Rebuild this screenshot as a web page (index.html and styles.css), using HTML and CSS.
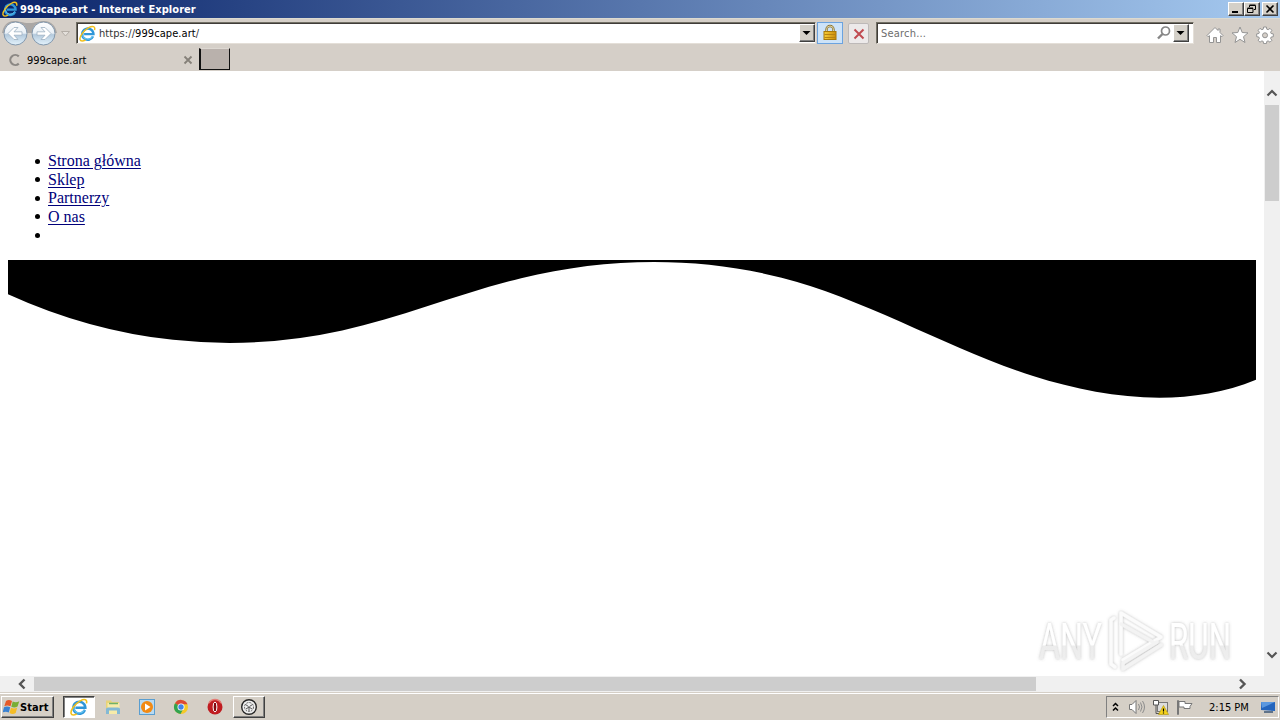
FILE: index.html
```
<!DOCTYPE html>
<html lang="pl">
<head>
	<meta charset="utf-8">
	<title>999cape.art</title>
	<link rel="stylesheet" href="styles.css">
</head>
<body>

	<svg class="defs" width="0" height="0">
		<defs>
			<linearGradient id="circle" x1="0" y1="0" x2="0" y2="1">
				<stop offset="0" stop-color="#fff"/><stop offset=".48" stop-color="#e9f0f6"/>
				<stop offset=".55" stop-color="#b3c9dc"/><stop offset="1" stop-color="#e4f3fc"/>
			</linearGradient>
			<linearGradient id="gold" x1="0" y1="0" x2="1" y2="0">
				<stop offset="0" stop-color="#f8cf38"/><stop offset="1" stop-color="#c98a08"/>
			</linearGradient>
			<linearGradient id="fade" x1="0" y1="0" x2="0" y2="1">
				<stop offset="0" stop-color="#fff"/><stop offset=".55" stop-color="#fff"/>
				<stop offset=".57" stop-color="#ececec"/><stop offset="1" stop-color="#f0f0f0"/>
			</linearGradient>
			<filter id="soft" x="-10%" y="-20%" width="120%" height="140%">
				<feDropShadow dx="0" dy="0" stdDeviation="1.5" flood-color="#777" flood-opacity=".5"/>
			</filter>
			<symbol id="ie" viewBox="0 0 16 16">
				<path d="M13.2 10.7A5.3 5.3 0 1 1 13.6 8.6H4.8" fill="none" stroke="#2f96d8" stroke-width="2.300"/>
				<path d="M12.9 10.3A5 5 0 0 1 3.4 9" fill="none" stroke="#62c4f2" stroke-width="1"/>
				<path d="M14.6 4.8C15.6 1.3 13 .3 9.1 2.5 4.4 5.200 .2 10.9 1 13.8c.5 1.800 2.800 1.500 5.100.3" fill="none" stroke="#f2c01c" stroke-width="1.4"/>
			</symbol>
		</defs>
	</svg>

	<div class="titlebar">
		<svg class="ie16" width="16" height="16"><use href="#ie"/></svg>
		<span class="title">999cape.art - Internet Explorer</span>
		<div class="winbtns">
			<span class="btn"><svg width="14" height="12"><path d="M3 8h6v2H3z"/></svg></span>
			<span class="btn"><svg width="14" height="12"><path d="M4.500 4V2.500h6v4H9M4.500 2h6M2.500 5.500h5.500v4H2.500zM2.500 5h5.500" fill="none" stroke="#000"/></svg></span>
			<span class="btn close"><svg width="14" height="12"><path d="M3.500 2.500l7 7M10.500 2.500l-7 7" stroke="#000" stroke-width="1.600"/></svg></span>
		</div>
	</div>

	<div class="navbar">
		<svg class="arrows" width="76" height="30">
			<path d="M14 3C20 3 22 5 29 5S38 3 44 3c8 0 12 6 13 12H2C3 8 7 3 14 3z" fill="#aaa7a5"/>
			<circle cx="15.500" cy="15.500" r="11.500" fill="url(#circle)" stroke="#8297ac"/>
			<circle cx="43.500" cy="15.500" r="11.500" fill="url(#circle)" stroke="#8297ac"/>
			<path d="M8 15.500l6-6h4l-4 4.300h8v3.400h-8l4 4.300h-4z" fill="#fff" stroke="#9cb0c2" stroke-width=".8"/>
			<path d="M51 15.500l-6-6h-4l4 4.300h-8v3.400h8l-4 4.300h4z" fill="#fff" stroke="#9cb0c2" stroke-width=".8"/>
			<path d="M61.500 13.500h8l-4 4.500z" fill="#e4e0db" stroke="#b4aea7"/>
		</svg>
		<div class="field address">
			<svg width="17" height="17"><use href="#ie"/></svg>
			<span class="url"><i>https://</i>999cape.art<i>/</i></span>
			<span class="drop"><svg width="13" height="15"><path d="M2.500 6h8L6.500 10z"/></svg></span>
		</div>
		<span class="lock">
			<svg width="16" height="18">
				<path d="M4.500 8V5.500a3.500 3.500 0 0 1 7 0V8" fill="none" stroke="#8a7434" stroke-width="2.400"/>
				<path d="M4.500 8V5.500a3.500 3.500 0 0 1 7 0V8" fill="none" stroke="#e6dcae" stroke-width=".9"/>
				<rect x="2" y="7.500" width="12" height="8" fill="url(#gold)" stroke="#a87908"/>
				<path d="M2.500 10.500h11M2.500 13.500h11" stroke="#b78310"/>
			</svg>
		</span>
		<span class="stop"><svg width="12" height="12"><path d="M1.500 1.500l9 9M10.500 1.500l-9 9" stroke="#c04a50" stroke-width="2"/></svg></span>
		<div class="field search">
			<span class="hint">Search...</span>
			<svg width="16" height="16"><circle cx="9.500" cy="6" r="4" fill="none" stroke="#868686" stroke-width="1.700"/><path d="M6.500 9L2 13.500" stroke="#868686" stroke-width="2.400"/></svg>
			<span class="drop"><svg width="13" height="15"><path d="M2.500 6h8L6.500 10z"/></svg></span>
		</div>
		<div class="tools">
			<svg width="18" height="18"><path d="M1 9.500L9 1.500l3 3V3h2v3.500l3 3-1 1.200-1.500-1V16.500h-4v-5h-3v5h-4V9.700L2 10.700z" fill="#fff" stroke="#949494"/></svg>
			<svg width="18" height="18"><path d="M9 1l2.200 5.500 5.800.4-4.500 3.800 1.500 5.800L9 13.300 4 16.500l1.500-5.800L1 6.900l5.800-.4z" fill="#fff" stroke="#949494"/></svg>
			<svg width="18" height="18"><path d="M7.600 1h2.800l.4 2.200 1.300.5 1.900-1.300 1.900 1.900-1.300 1.900.5 1.300 2.200.4v2.800l-2.200.4-.5 1.300 1.300 1.900-1.900 1.900-1.900-1.300-1.300.5-.4 2.200H7.600l-.4-2.200-1.300-.5L4 16.200l-1.900-1.900 1.300-1.900-.5-1.300-2.200-.4V7.900l2.200-.4.5-1.300L2.100 4.300 4 2.400l1.900 1.300 1.300-.5z" fill="#fff" stroke="#949494"/><circle cx="9" cy="9.300" r="2.500" fill="#d5cfc8" stroke="#949494"/></svg>
		</div>
	</div>

	<div class="tabs">
		<div class="tab">
			<svg width="14" height="14"><path d="M10.800 3.400a5 5 0 1 0 0 7.200" fill="none" stroke="#8b8884" stroke-width="2.200"/></svg>
			<span class="name">999cape.art</span>
			<svg width="10" height="10"><path d="M1.500 1.500l7 7M8.500 1.500l-7 7" stroke="#858079" stroke-width="1.800"/></svg>
		</div>
		<div class="newtab"></div>
	</div>

	<div class="view">
		<div class="page">
			<ul class="menu">
				<li><a href="#">Strona główna</a></li>
				<li><a href="#">Sklep</a></li>
				<li><a href="#">Partnerzy</a></li>
				<li><a href="#">O nas</a></li>
				<li></li>
			</ul>
			<svg class="wave" viewBox="0 0 1200 120" preserveAspectRatio="none">
				<path d="M321.390,56.440c58-10.790,114.160-30.130,172-41.860,82.390-16.720,168.190-17.730,250.450-.39C823.780,31,906.670,72,985.660,92.830c70.050,18.480,146.530,26.090,214.340,3V0H0V27.350A600.210,600.210,0,0,0,321.390,56.440Z"/>
			</svg>
		</div>
		<div class="vscroll">
			<svg width="16" height="16"><path d="M3.500 10.500L8 6l4.500 4.500" fill="none" stroke="#555" stroke-width="2.200"/></svg>
			<div class="thumb"></div>
			<svg class="down" width="16" height="16"><path d="M3.500 5.500L8 10l4.500-4.500" fill="none" stroke="#555" stroke-width="2.200"/></svg>
		</div>
		<!-- watermark over the page -->
		<svg class="mark" width="220" height="70">
			<g filter="url(#soft)">
				<g class="marktext" fill="url(#fade)">
					<text x="9" y="53" textLength="63" lengthAdjust="spacingAndGlyphs">ANY</text>
					<text x="139" y="53" textLength="62" lengthAdjust="spacingAndGlyphs">RUN</text>
				</g>
				<g fill="none" stroke="#fbfbfb" stroke-width="3.500" stroke-linejoin="round" stroke-linecap="round">
					<path d="M84 12l-3 2v44l4 3"/>
					<path d="M91 48V7l40 24-38 23"/>
					<path d="M91 18l32 18M131 39L93 63v-6l34-21" stroke="#f3f3f3"/>
				</g>
			</g>
		</svg>
	</div>
	<div class="hscroll">
		<svg width="16" height="16"><path d="M12.500 3.500L8 8l4.500 4.500" fill="none" stroke="#555" stroke-width="2.400"/></svg>
		<div class="thumb"></div>
		<svg class="right" width="16" height="16"><path d="M5 3.500L9.500 8 5 12.500" fill="none" stroke="#555" stroke-width="2.400"/></svg>
	</div>

	<div class="taskbar">
		<div class="start">
			<svg width="17" height="16">
				<path d="M3 2c2-1.500 4-1.200 6 0L7.500 7.300C5.500 6.300 3.500 6 1.300 7.300z" fill="#e65a28"/>
				<path d="M9.700 2.500c2 1.200 4.500 1 6.600-.2L14.500 7.600c-2 1.200-4.200 1.200-6.200.2z" fill="#79ae35"/>
				<path d="M1 8.300c2-1.200 4.200-1 6.200 0l-1.400 5.200c-2-1-4.200-1.200-6.200 0z" fill="#3a82d2"/>
				<path d="M8 8.800c2 1 4.200 1 6.200-.2l-1.500 5.400c-2 1.200-4.200 1.200-6.200 0z" fill="#f5bd27"/>
			</svg>
			<span>Start</span>
		</div>
		<div class="quick">
			<span class="task active"><svg width="18" height="18"><use href="#ie"/></svg></span>
			<span class="task"><svg width="18" height="18"><path d="M2 2.500h5l1 1.500h7v12H2z" fill="#e8d378"/><path d="M3.500 5h12v11h-12z" fill="#f7eba9"/><path d="M5 5.500h9" stroke="#6fb169" stroke-width="1.500"/><path d="M2 16v-5q0-1.500 2-1.500h10q2 0 2 1.500V16h-3v-3.500H5V16z" fill="#83b9d5"/></svg></span>
			<span class="task"><svg width="18" height="18"><rect x="1.500" y="1.500" width="15" height="15" fill="#b8daf2" stroke="#5a9ed0"/><circle cx="9" cy="9" r="6" fill="#f28a14"/><path d="M7 5.500l5.500 3.500L7 12.500z" fill="#fff"/></svg></span>
			<span class="task"><svg width="18" height="18"><circle cx="9" cy="9" r="7" fill="#f5c928"/><path d="M9 9L3 5.300A7 7 0 0 1 15.500 6.200H9z" fill="#dc4936"/><path d="M3 5.300A7 7 0 0 0 8.500 16l3-5.500L9 9z" fill="#32a350"/><circle cx="9" cy="9" r="3.500" fill="#fff"/><circle cx="9" cy="9" r="2.700" fill="#4284e8"/></svg></span>
			<span class="task"><svg width="18" height="18"><circle cx="9" cy="9" r="7.500" fill="#c01c20"/><path d="M3 5a7 7 0 0 1 12 0" fill="none" stroke="#e57b74" stroke-width="1.500"/><ellipse cx="9" cy="9" rx="1.900" ry="5" fill="#85080d" stroke="#fff" stroke-width="1"/></svg></span>
			<span class="task raised"><svg width="18" height="18"><circle cx="9" cy="9" r="7.300" fill="#eee" stroke="#252525" stroke-width="1.400"/><circle cx="9" cy="9" r="4.500" fill="none" stroke="#666" stroke-dasharray="2 1"/><path d="M5.500 6.500l3 2M12.500 6.500l-3 2M6 11l3-2 3 2M9 9v4" fill="none" stroke="#555"/></svg></span>
		</div>
		<div class="tray">
			<svg class="chev" width="7" height="11"><path d="M1 4L3.500 1.500 6 4M1 8.500L3.500 6 6 8.500" fill="none" stroke="#000" stroke-width="1.500"/></svg>
			<svg class="vol" width="18" height="16"><path d="M1.500 5.500h2.500l4-4v13l-4-4H1.500z" fill="#fff" stroke="#777"/><path d="M10.500 5q2 3 0 6M12.500 3.500q3 4.500 0 9M14.500 2q4 6 0 12" fill="none" stroke="#8c8c8c"/></svg>
			<svg class="net" width="18" height="17"><rect x="5.500" y="3.500" width="10" height="9" fill="#ddd" stroke="#777"/><path d="M1.500 1.500h5v4.500h-5zM4 6v8.500M4 14.500h6" fill="#fff" stroke="#555"/><path d="M11.500 6.500l5 9h-10z" fill="#f5d21a" stroke="#b59b14" stroke-width=".7"/><path d="M11.500 9.500v3M11.500 13.500v1" stroke="#000" stroke-width="1.200"/></svg>
			<svg class="flag" width="18" height="16"><path d="M1.500 15.500v-14h1v14zM3 2.500h6v2h7l-2 3 0 2H8V8H3z" fill="#fff" stroke="#777"/></svg>
			<span class="clock">2:15 PM</span>
			<svg class="desk" width="16" height="14"><path d="M1 2l14 0 0 9-14-1z" fill="#2465bd"/><path d="M1 2h14L2 8z" fill="#5b98df"/><path d="M4 12l9 0" stroke="#385475" stroke-width="1.500"/></svg>
		</div>
	</div>

</body>
</html>
```
FILE: styles.css
```
body {margin: 0; width: 1280px; height: 720px; overflow: hidden; background: #d4d0c8;
	display: flex; flex-direction: column;
	font-family: "DejaVu Sans Condensed", "DejaVu Sans", sans-serif; font-stretch: condensed; font-size: 11px; color: #000;}
svg {display: block; flex: none;}
div, span {box-sizing: border-box;}
.defs {position: absolute;}

/* title bar */
.titlebar {height: 18px; flex: none; display: flex; align-items: center; padding: 0 2px;
	background: linear-gradient(to right, #0a246a, #a6caf0);}
.title {margin-left: 2px; color: #fff; font-weight: bold; width: 190px; white-space: nowrap; letter-spacing: 0.06px;}
.winbtns {margin-left: auto; display: flex;}
.btn, .drop {background: #d4d0c8; border: 1px solid; border-color: #fff #404040 #404040 #fff; box-shadow: inset -1px -1px #808080;}
.btn {width: 16px; height: 14px;}
.close {margin-left: 2px;}

/* address row */
.navbar {height: 30px; flex: none; display: flex; align-items: flex-start; background: #d5cfc8; border-top: 1px solid #dcdad0;}
.arrows {margin-top: -1px;}
.field {height: 22px; margin-top: 3px; background: #fff; border: 1px solid; border-color: #716f64 #e4dfd8 #e4dfd8 #716f64;
	box-shadow: inset 1px 1px #403c38; display: flex; align-items: center;}
.address {width: 740px; padding-left: 2px;}
.url {margin: 1px 0 0 3px; letter-spacing: 0.07px;}
.url i {font-style: normal; color: #333;}
.drop {width: 16px; height: 18px; margin-left: auto;}
.lock {width: 26px; height: 22px; margin: 3px 0 0 1px; background: #cde3f8; border: 1px solid #6ba3df; display: flex; justify-content: center; align-items: center;}
.stop {width: 21px; height: 21px; margin: 4px 0 0 5px; background: #ece9e9; border: 1px solid #bdb9b8; border-radius: 2px; display: flex; justify-content: center; align-items: center;}
.search {width: 318px; margin-left: 7px; padding: 0 4px;}
.hint {color: #6d6d6d; width: 275px; margin-top: 1px; letter-spacing: 0.2px;}
.search .drop {margin-left: 1px;}
.tools {display: flex; gap: 7px; margin: 7px 0 0 12px;}

/* tabs */
.tabs {height: 23px; flex: none; display: flex; background: #d5cfc8;}
.tab {width: 199px; display: flex; align-items: center; padding: 1px 6px 0 8px;}
.name {margin-left: 5px; width: 156px; letter-spacing: -0.06px;}
.newtab {width: 31px; height: 22px; background: #b9b1ac; border: 1px solid; border-color: #ddd8d2 #111 #111 #111; border-width: 1px 1px 1px 2px;}

/* page */
.view {height: 605px; flex: none; display: flex; position: relative; background: #fff;}
.page {width: 1264px; padding: 0 8px; font-family: "Liberation Serif", "Times New Roman", serif; font-size: 16px; font-stretch: normal;}
.menu {margin: 81px 0 15.5px; padding-left: 27px; line-height: 18.5px; list-style: none;}
.menu li {height: 18.5px; display: flex; align-items: center;}
.menu li::before {content: ""; width: 5px; height: 5px; margin-right: 8px; border-radius: 50%; background: #000;}
.menu a {color: #00007a; text-underline-offset: 2px;}
.wave {width: 1248px; height: 150px; margin-top: -0.5px;}
.vscroll {width: 16px; background: #f0f0f0; display: flex; flex-direction: column; padding: 14px 0 13px;}
.vscroll .thumb {height: 96px; margin: 4px 1px 0; background: #cdcdcd;}
.down {margin-top: auto;}
.mark {position: absolute; left: 1030px; top: 535px;}
.marktext {font-family: Roboto, sans-serif; font-weight: 400; font-size: 50px; font-stretch: normal;}

.hscroll {height: 16px; flex: none; display: flex; align-items: center; background: #f0f0f0; padding: 0 29px 0 12px;}
.hscroll .thumb {width: 1002px; height: 14px; margin-left: 6px; background: #cdcdcd;}
.right {margin-left: auto;}

/* taskbar */
.taskbar {height: 28px; flex: none; display: flex; align-items: flex-start; background: #d5cfc6; border-top: 1px solid #d5cfc6; box-shadow: inset 0 1px #fff; padding: 3px 1px 0;}
.start {width: 53px; height: 22px; border: 1px solid; border-color: #fff #404040 #404040 #fff; box-shadow: inset -1px -1px #808080;
	display: flex; align-items: center; padding-left: 1px; font-weight: bold; font-size: 11px; letter-spacing: 0.1px;}
.quick {display: flex; margin-left: 8px;}
.task {width: 34px; height: 22px; display: flex; align-items: center; justify-content: center; border: 1px solid transparent;}
.active {background: #fff; width: 32px; margin: 0 1px; border-color: #404040 #fff #fff #404040; box-shadow: inset 1px 1px #808080;}
.raised {width: 32px; margin: 0 1px; border-color: #fff #404040 #404040 #fff; box-shadow: inset -1px -1px #808080;}
.tray {width: 173px; height: 22px; margin-left: auto; display: flex; align-items: center; border: 1px solid; border-color: #808080 #fff #fff #808080; padding-left: 5px;}
.vol {margin-left: 9px;}
.net {margin-left: 6px;}
.flag {margin-left: 6px;}
.clock {margin-left: 15px; width: 51px; white-space: nowrap;}
```
